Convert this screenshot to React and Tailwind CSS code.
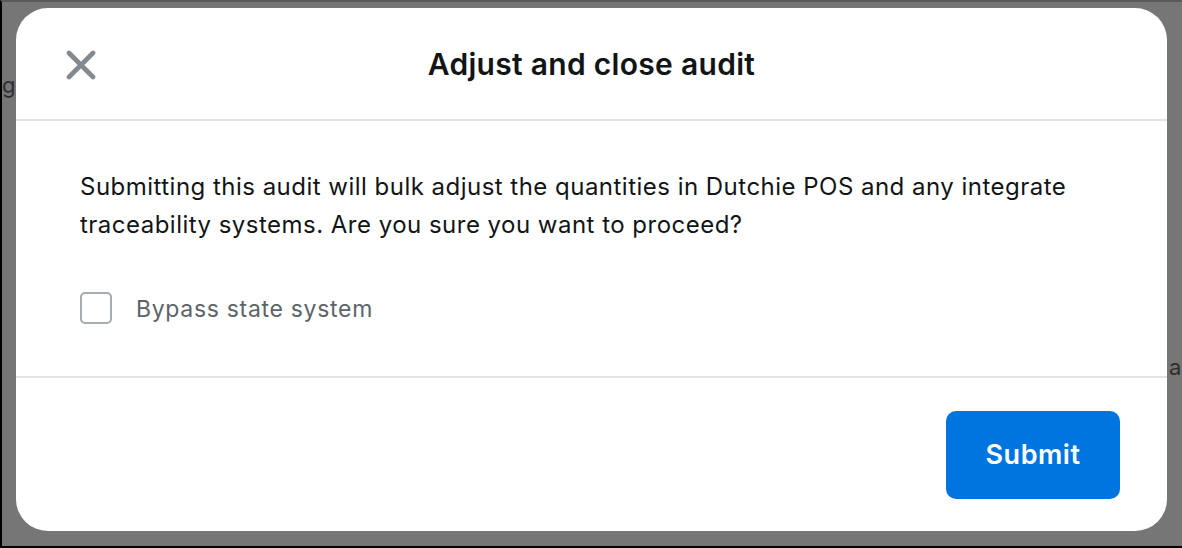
import { useState } from 'react';

const CloseIcon = () => (
  <svg width="30" height="30" viewBox="0 0 30 30" fill="none">
    <path d="M3 3L27 27M27 3L3 27" stroke="#828a8f" strokeWidth="4.6" strokeLinecap="round" />
  </svg>
);

export default function App() {
  const [bypass, setBypass] = useState(false);

  return (
    <div
      className="relative w-[1182px] h-[548px] overflow-hidden bg-[#767676] border-l-2 border-b-2 border-t-2 border-l-black border-b-black border-t-[#5a5a5a] pl-[14px] pt-[6px]"
      style={{ fontFamily: 'Inter, "Noto Sans", sans-serif' }}
    >
      {/* page behind the overlay */}
      <span className="absolute left-[0px] top-[67px] text-[22px] text-[#2e2e2e]">ge</span>
      <span className="absolute left-[1167px] top-[349px] text-[22px] text-[#2e2e2e]">a</span>

      <div className="relative flex flex-col w-[1151px] h-[523px] bg-white rounded-[32px] text-[#121516]">
        <header className="relative flex items-center justify-center h-[113px] border-b-2 border-[#e3e3e3]">
          <button className="absolute left-[50px] top-[42px] p-0">
            <CloseIcon />
          </button>
          <h1 className="text-[30px] font-semibold tracking-[0.01em] pt-[2px]">Adjust and close audit</h1>
        </header>

        <div className="h-[257px] border-b-2 border-[#e3e3e3] pl-[64px] pt-[47px]">
          <p className="w-[1010px] text-[24px] leading-[38px] tracking-[0.02em]">
            Submitting this audit will bulk adjust the quantities in Dutchie POS and any integrate traceability systems. Are you sure you want to proceed?
          </p>
          <label className="mt-[45px] flex items-center gap-6 cursor-pointer">
            <input
              type="checkbox"
              checked={bypass}
              onChange={(e) => setBypass(e.target.checked)}
              className="appearance-none w-8 h-8 rounded-[5px] border-2 border-[#a6acb0] bg-white checked:bg-[#0075e0] checked:border-[#0075e0]"
            />
            <span className="text-[23px] tracking-[0.03em] text-[#5c6469] pt-[3px]">Bypass state system</span>
          </label>
        </div>

        <footer className="flex-1 flex items-start justify-end pt-[33px] pr-[47px]">
          <button className="w-[174px] h-[88px] rounded-[10px] bg-[#0075e0] text-white text-[27px] font-semibold tracking-[0.02em]">
            Submit
          </button>
        </footer>
      </div>
    </div>
  );
}
